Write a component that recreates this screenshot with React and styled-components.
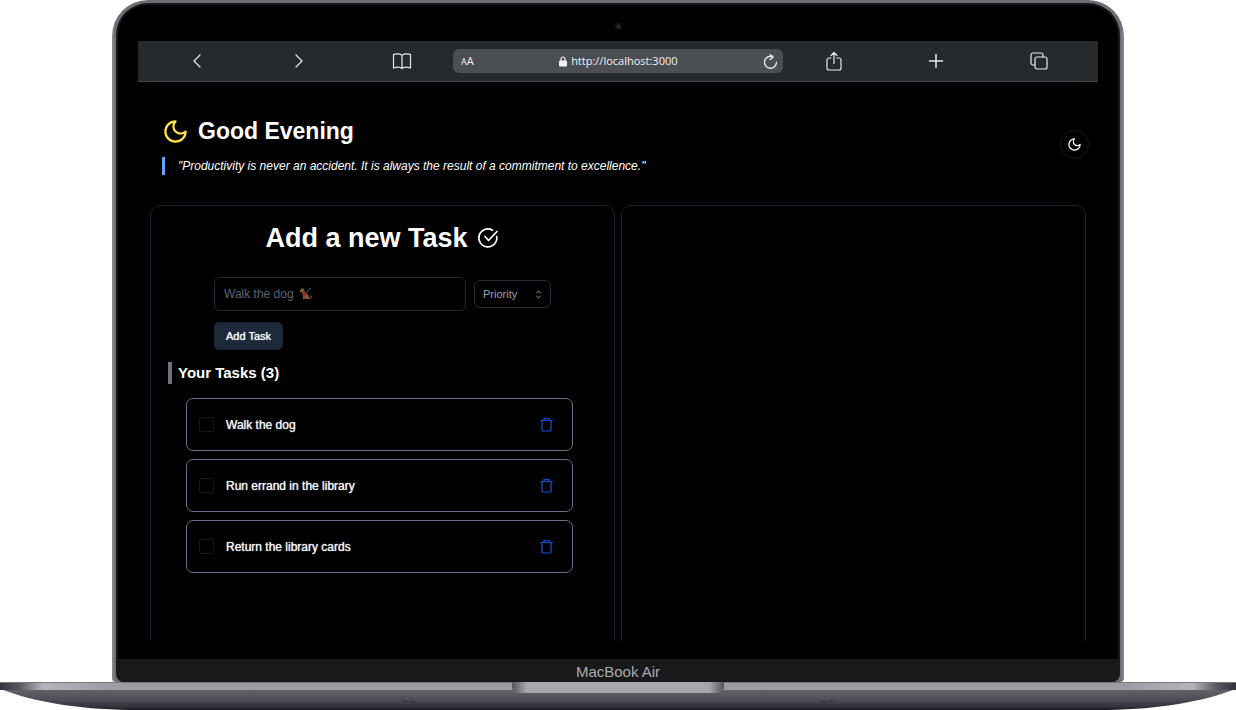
import React, { useState } from 'react';
import styled, { createGlobalStyle } from 'styled-components';
import { RxCaretSort } from 'react-icons/rx';

const GlobalStyle = createGlobalStyle`
  * { box-sizing: border-box; }
  body { margin: 0; background: #fff; font-family: 'Liberation Sans', Arial, sans-serif; }
  button, input, select { font: inherit; color: inherit; margin: 0; }
  h1, h2, h3, p, ul { margin: 0; padding: 0; }
`;

const Laptop = styled.main`
  display: flex;
  flex-direction: column;
  min-width: 900px;
`;

const Lid = styled.div`
  margin: 0 112px;
  padding-top: 3px;
  border-radius: 36px 36px 4px 4px;
  background: linear-gradient(90deg, #8d8e93, #6e6f76 3px, #6e6f76 calc(100% - 3px), #8d8e93);
`;

const Bezel = styled.div`
  margin: 0 4px;
  border: 2px solid #18191b;
  border-bottom: 0;
  border-radius: 32px 32px 8px 8px;
  background: #000;
  overflow: hidden;
`;

const CameraStrip = styled.div`
  display: flex;
  justify-content: center;
  align-items: center;
  height: 36px;
  padding-top: 6px;
`;

const Camera = styled.span`
  width: 7px;
  height: 7px;
  border-radius: 50%;
  background: radial-gradient(#2a2c36 1px, #141416 2px);
`;

const Screen = styled.section`
  height: 600px;
  margin: 0 20px 18px;
  overflow: hidden;
  color: #fff;
`;

const Chin = styled.div`
  height: 23px;
  background: #191919;
  color: #a9aaae;
  font-size: 15px;
  line-height: 25px;
  text-align: center;
`;

const Toolbar = styled.nav`
  display: grid;
  grid-template-columns: repeat(3, 1fr) 330px repeat(3, 1fr);
  align-items: center;
  height: 41px;
  padding: 0 8px;
  background: #262a2d;
  border-bottom: 1px solid #44484c;
`;

const ToolButton = styled.button`
  display: flex;
  justify-content: center;
  padding: 0;
  border: 0;
  background: none;
  color: #e8e9ea;
`;

const AddressBar = styled.div`
  display: flex;
  align-items: center;
  justify-content: space-between;
  height: 24px;
  padding: 0 5px 0 8px;
  border-radius: 6px;
  background: #4b4e53;
  color: #f2f2f3;
  font: 11px/24px 'Open Sans', sans-serif;
`;

const TextSize = styled.span`
  padding-top: 1px;
  font-size: 11px;
  small { font-size: 9px; }
`;

const Address = styled.span`
  display: flex;
  align-items: center;
  gap: 4px;
`;

const Header = styled.header`
  display: flex;
  justify-content: space-between;
  align-items: center;
  padding: 35px 9px 0 24px;
`;

const Greeting = styled.h1`
  display: flex;
  align-items: center;
  gap: 9px;
  font-size: 23px;
  line-height: 28px;
`;

const Quote = styled.p`
  margin-top: 12px;
  padding-left: 13px;
  border-left: 3px solid #60a5fa;
  font-size: 12px;
  line-height: 18px;
  font-style: italic;
`;

const ThemeButton = styled.button`
  display: grid;
  place-items: center;
  width: 29px;
  height: 29px;
  margin-bottom: 4px;
  padding: 0;
  border: 1px solid #141824;
  border-radius: 50%;
  background: #000;
`;

const Panels = styled.div`
  display: grid;
  grid-template-columns: 1fr 1fr;
  gap: 6px;
  padding: 30px 12px 0;
`;

const Panel = styled.section`
  min-height: 480px;
  padding: 17px;
  border: 1px solid #1c202b;
  border-radius: 10px;
`;

const PanelTitle = styled.h2`
  display: flex;
  justify-content: center;
  align-items: center;
  gap: 8px;
  font-size: 27px;
  line-height: 30px;
`;

const TaskForm = styled.form`
  display: grid;
  grid-template-columns: 1fr 77px;
  align-items: center;
  gap: 11px 8px;
  margin: 24px 46px 0;
`;

const Field = styled.div`
  position: relative;
  display: flex;
`;

const TextInput = styled.input`
  width: 100%;
  height: 34px;
  padding: 0 9px;
  border: 1px solid #262b33;
  border-radius: 6px;
  background: #000;
  font-size: 12px;
  &::placeholder { color: #5b6370; opacity: 1; }
`;

const DogBadge = styled.span`
  position: absolute;
  left: 85px;
  top: 10px;
  display: flex;
  pointer-events: none;
  ${TextInput}:not(:placeholder-shown) + & { display: none; }
`;

const Select = styled.select`
  appearance: none;
  width: 100%;
  height: 28px;
  padding: 0 8px;
  border: 1px solid #262b33;
  border-radius: 6px;
  background: #000;
  color: #94a3b8;
  font-size: 11px;
`;

const SelectArrow = styled.span`
  position: absolute;
  right: 6px;
  top: 8px;
  display: flex;
  color: #8a8f98;
  pointer-events: none;
`;

const AddButton = styled.button`
  justify-self: start;
  height: 28px;
  padding: 0 11px;
  border: 1px solid #1a2333;
  border-radius: 5px;
  background: #1e293b;
  color: #f8fafc;
  font-size: 11px;
  text-shadow: 0 0 1px currentColor;
`;

const ListTitle = styled.h3`
  margin-top: 12px;
  padding-left: 6px;
  border-left: 4px solid #6b7280;
  font-size: 15px;
  line-height: 22px;
`;

const TaskList = styled.ul`
  display: grid;
  gap: 8px;
  margin: 14px 24px 0 18px;
  list-style: none;
`;

const TaskItem = styled.li`
  display: flex;
  align-items: center;
  justify-content: space-between;
  height: 53px;
  padding: 0 19px 0 12px;
  border: 1px solid #64748b;
  border-radius: 7px;
`;

const TaskLabel = styled.label`
  display: flex;
  align-items: center;
  gap: 12px;
  color: #f1f5f9;
  font-size: 12px;
  text-shadow: 0 0 1px currentColor;
`;

const Checkbox = styled.input`
  appearance: none;
  width: 15px;
  height: 15px;
  border: 1px solid #15181f;
  border-radius: 2px;
  &:checked { background: #1e293b; }
`;

const DeleteButton = styled.button`
  display: flex;
  padding: 0;
  border: 0;
  background: none;
  color: #1d4ed8;
`;

const Base = styled.div`
  height: 28px;
  svg { display: block; width: 100%; height: 28px; }
`;

const Icon = ({ size = 20, width = 1.2, children }) => (
  <svg width={size} height={size} viewBox="0 0 20 20" fill="none" stroke="currentColor" strokeWidth={width} strokeLinecap="round" strokeLinejoin="round">
    {children}
  </svg>
);

const Moon = ({ size, color }) => (
  <svg width={size} height={size} viewBox="0 0 24 24" fill="none" stroke={color} strokeWidth="2" strokeLinecap="round" strokeLinejoin="round">
    <path d="M12 3a6 6 0 0 0 9 9 9 9 0 1 1-9-9Z" />
  </svg>
);

const CircleCheck = () => (
  <svg width="24" height="24" viewBox="0 0 24 24" fill="none" stroke="#fff" strokeWidth="1.700" strokeLinecap="round" strokeLinejoin="round">
    <path d="M20.700 10.500A9 9 0 1 1 16.500 4.200" />
    <path d="m21 5.500-8.500 9-3.500-4" />
  </svg>
);

const Trash = () => (
  <svg width="13" height="15" viewBox="0 0 13 15" fill="none" stroke="currentColor" strokeWidth="1.200">
    <path d="M.3 3.500H12.700M4 3.500V1.500H9V3.500M2 3.500V13Q2 14 3 14H10Q11 14 11 13V3.500" />
  </svg>
);

const Dog = () => (
  <svg width="13" height="13" viewBox="0 0 13 13">
    <path d="M9.500 11.300c3 .3 3-1.800 2.200-2.800" fill="none" stroke="#7a4f2c" strokeWidth="1.200" />
    <path d="M1 3.500 2 2.500 2.300.8l1.200 1L5 1.500v2.300L8 6.500q2 1.500 2 5.500H3.500l.8-2L3 5.500 1 5Z" fill="#8a5a33" />
    <path d="m3.800 5 1-1L8 6.800 6.800 9 4 7.800Z" fill="#8f2433" />
    <path d="m7.800 6 1.700-3L12 1" fill="none" stroke="#1c6b80" strokeWidth="1" />
    <path d="M5.500 12V9.800M7.800 12v-1.500" stroke="#4b2c17" strokeWidth=".6" />
  </svg>
);

const LaptopBase = () => (
  <svg viewBox="0 0 1236 28" preserveAspectRatio="none" aria-hidden="true">
    <defs>
      <linearGradient id="lip">
        <stop offset="0" stopColor="#33343d" />
        <stop offset=".015" stopColor="#55565e" />
        <stop offset=".035" stopColor="#b4b5b9" />
        <stop offset=".09" stopColor="#9c9da2" />
        <stop offset=".91" stopColor="#9c9da2" />
        <stop offset=".965" stopColor="#b4b5b9" />
        <stop offset=".985" stopColor="#55565e" />
        <stop offset="1" stopColor="#33343d" />
      </linearGradient>
      <linearGradient id="body" x2="0" y2="1">
        <stop offset="0" stopColor="#64656b" />
        <stop offset=".5" stopColor="#4d4e57" />
        <stop offset=".85" stopColor="#31323c" />
        <stop offset="1" stopColor="#15151c" />
      </linearGradient>
      <linearGradient id="notch">
        <stop offset="0" stopColor="#55565c" />
        <stop offset=".07" stopColor="#a6a7ac" />
        <stop offset=".93" stopColor="#a6a7ac" />
        <stop offset="1" stopColor="#55565c" />
      </linearGradient>
    </defs>
    <path d="M0 7C35 20 75 27 130 28H1106C1161 27 1201 20 1236 7Z" fill="url(#body)" />
    <path d="M0 0H1236V8H0Z" fill="url(#lip)" />
    <path d="M0 .5H1236" stroke="#77787e" />
    <path d="M512 0H724V6Q723 11 715 11H521Q513 11 512 6Z" fill="url(#notch)" />
    <path d="M403 19h4m3 1h5M821 20h5m3-1h4" stroke="#373842" strokeWidth="2" />
  </svg>
);

const initialTasks = ['Walk the dog', 'Run errand in the library', 'Return the library cards'];

export default function App() {
  const [tasks, setTasks] = useState(initialTasks);
  const [draft, setDraft] = useState('');

  const addTask = (event) => {
    event.preventDefault();
    if (draft.trim()) setTasks([...tasks, draft.trim()]);
    setDraft('');
  };

  return (
    <Laptop>
      <GlobalStyle />
      <Lid>
        <Bezel>
          <CameraStrip><Camera /></CameraStrip>
          <Screen>
            <Toolbar aria-label="Browser">
              <ToolButton aria-label="Back"><Icon><path d="M13 4 7 10l6 6" /></Icon></ToolButton>
              <ToolButton aria-label="Forward"><Icon><path d="m7 4 6 6-6 6" /></Icon></ToolButton>
              <ToolButton aria-label="Bookmarks">
                <Icon><path d="M10 4.500C8.500 2.500 4 2.500 1.500 3.500v13.500c3-1 7-1 8.500.500 1.500-1.500 5.500-1.500 8.500-.500v-13.500C16 2.500 11.500 2.500 10 4.500V17" /></Icon>
              </ToolButton>
              <AddressBar>
                <TextSize><small>A</small>A</TextSize>
                <Address>
                  <svg width="8" height="11" viewBox="0 0 8 11">
                    <rect y="4.500" width="8" height="6" rx="1" fill="#f2f2f3" />
                    <path d="M2 5V3a2 2 0 0 1 4 0v2" fill="none" stroke="#f2f2f3" strokeWidth="1.200" />
                  </svg>
                  http://localhost:3000
                </Address>
                <ToolButton aria-label="Reload">
                  <Icon size={15} width={1.8}><path d="M18 11a8 8 0 1 1-8-8h3M9.500 1l4 3-4 3.500" /></Icon>
                </ToolButton>
              </AddressBar>
              <ToolButton aria-label="Share">
                <Icon><path d="M7 7H5a2 2 0 0 0-2 2v8a2 2 0 0 0 2 2h10a2 2 0 0 0 2-2V9a2 2 0 0 0-2-2h-2M10 12.500V1.500M7 4.500l3-3 3 3" /></Icon>
              </ToolButton>
              <ToolButton aria-label="New tab"><Icon width={1.5}><path d="M10 3.500v13M3.500 10h13" /></Icon></ToolButton>
              <ToolButton aria-label="Tabs">
                <Icon><rect x="6" y="6" width="12" height="12" rx="2" /><path d="M6 14H4a2 2 0 0 1-2-2V4a2 2 0 0 1 2-2h8a2 2 0 0 1 2 2v2" /></Icon>
              </ToolButton>
            </Toolbar>

            <Header>
              <div>
                <Greeting><Moon size={27} color="#fde047" />Good Evening</Greeting>
                <Quote>"Productivity is never an accident. It is always the result of a commitment to excellence."</Quote>
              </div>
              <ThemeButton aria-label="Toggle theme"><Moon size={15} color="#fff" /></ThemeButton>
            </Header>

            <Panels>
              <Panel>
                <PanelTitle>Add a new Task <CircleCheck /></PanelTitle>
                <TaskForm onSubmit={addTask}>
                  <Field>
                    <TextInput aria-label="New task" placeholder="Walk the dog" value={draft} onChange={(e) => setDraft(e.target.value)} />
                    <DogBadge><Dog /></DogBadge>
                  </Field>
                  <Field>
                    <Select aria-label="Priority" defaultValue="">
                      <option value="">Priority</option>
                      <option>High</option>
                      <option>Medium</option>
                      <option>Low</option>
                    </Select>
                    <SelectArrow><RxCaretSort size={13} /></SelectArrow>
                  </Field>
                  <AddButton type="submit">Add Task</AddButton>
                </TaskForm>
                <ListTitle>Your Tasks ({tasks.length})</ListTitle>
                <TaskList>
                  {tasks.map((task, index) => (
                    <TaskItem key={task + index}>
                      <TaskLabel><Checkbox type="checkbox" />{task}</TaskLabel>
                      <DeleteButton aria-label={`Delete ${task}`} onClick={() => setTasks(tasks.filter((_, i) => i !== index))}>
                        <Trash />
                      </DeleteButton>
                    </TaskItem>
                  ))}
                </TaskList>
              </Panel>
              <Panel />
            </Panels>
          </Screen>
          <Chin>MacBook Air</Chin>
        </Bezel>
      </Lid>
      <Base><LaptopBase /></Base>
    </Laptop>
  );
}
